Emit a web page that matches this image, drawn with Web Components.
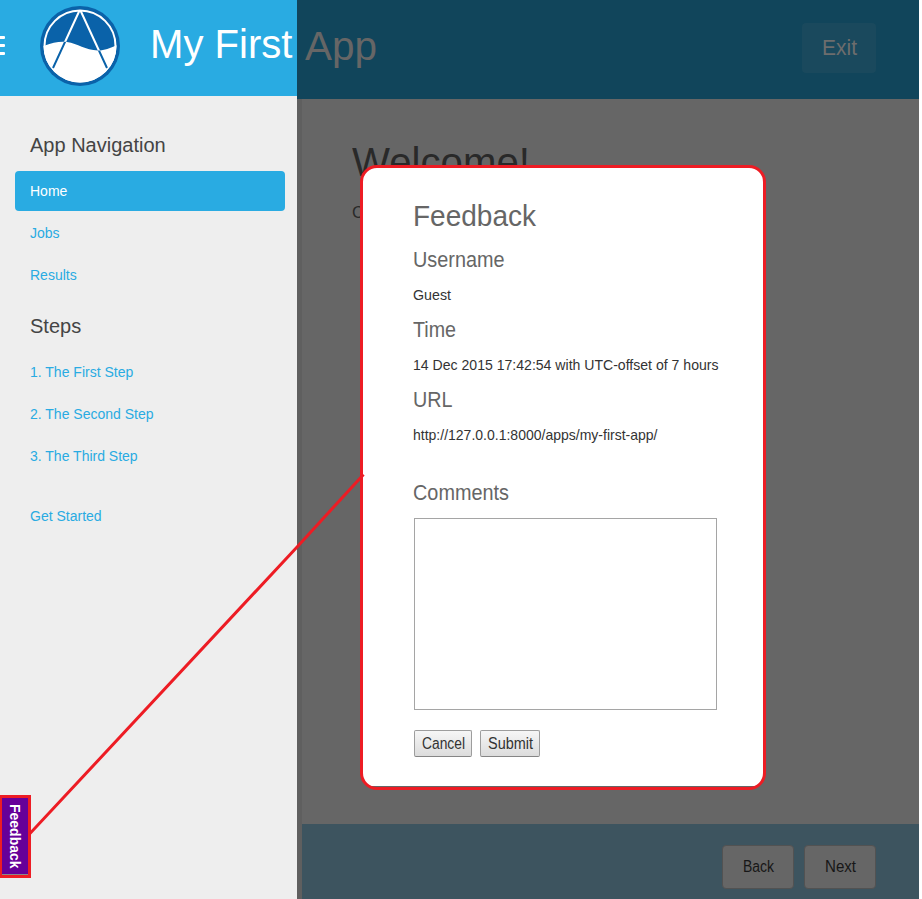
<!DOCTYPE html>
<html lang="en">
<head>
<meta charset="utf-8">
<title>My First App</title>
<style>
html,body{margin:0;height:100%;overflow:hidden;background:#fff}
body{font-family:"Liberation Sans",Arial,sans-serif}
</style>
</head>
<body>
<app-page></app-page>
<script>
function define(name, html, after) {
  customElements.define(name, class extends HTMLElement {
    connectedCallback() {
      if (this.shadowRoot) return;
      const t = document.createElement('template');
      t.innerHTML = html;
      this.attachShadow({ mode: 'open' }).append(t.content.cloneNode(true));
      if (after) after(this);
    }
  });
}

/* A single line of text, condensed or widened to the width in its "w" attribute. */
define('fit-text', `<style>
  :host{display:block;white-space:nowrap;height:var(--h,auto);line-height:var(--h,normal)}
  span{display:inline-block;transform-origin:0 50%}
</style><span><slot></slot></span>`, el => {
  const s = el.shadowRoot.querySelector('span');
  const w = +el.getAttribute('w');
  const r = s.getBoundingClientRect().width;
  if (w && r) { s.style.transform = `scaleX(${w / r})`; el.style.width = w + 'px'; }
});

define('app-logo', `<style>:host{display:block;width:80px;height:80px}svg{display:block}</style>
<svg width="80" height="80" viewBox="0 0 80 80">
  <defs><clipPath id="wave"><path d="M0 41L5 39.5C12 36.8 20 35 27 36C38 37.600 45 44 58 44.500C65 44.500 70 42 75 40L80 38V80H0Z"/></clipPath></defs>
  <circle cx="40" cy="40" r="40" fill="#0a62a9"/>
  <circle cx="40" cy="40" r="35.500" fill="none" stroke="#fff" stroke-width="2"/>
  <path d="M39.500 4.500L13 62M40.500 4.500L67 62" stroke="#fff" stroke-width="2" fill="none"/>
  <g clip-path="url(#wave)"><circle cx="40" cy="40" r="36.500" fill="#fff"/>
  <path d="M39.500 4.500L13 62M40.500 4.500L67 62" stroke="#0a62a9" stroke-width="2" fill="none"/></g>
</svg>`);

define('nav-item', `<style>
  :host{display:flex;align-items:center;height:40px;box-sizing:border-box;padding-left:15px;border-radius:4px;color:#29abe2;font-size:14px;margin-bottom:2px}
  :host([active]){background:#29abe2;color:#fff}
</style><fit-text><slot></slot></fit-text>`);

define('app-sidebar', `<style>
  :host{display:flex;flex-direction:column;background:#eee;height:100%;overflow:hidden}
  header{display:flex;height:96px;background:#29abe2;color:#fff;flex:none}
  .menu{width:5px;height:19px;margin:36px 35px 0 0;display:flex;flex-direction:column;justify-content:space-between}
  .menu i{height:3px;background:#fff;border-radius:0 1px 1px 0}
  app-logo{margin:6px 30px 0 0}
  .title{--h:46px;font-size:40px;padding-top:21px}
  nav{padding:0 12px 0 15px}
  h2{margin:0;font-weight:400;font-size:20px;line-height:40px;color:#444;padding-left:15px}
  .one{padding-top:29px;height:46px}
  .two{padding-top:9px;height:46px}
  nav h2{box-sizing:content-box}
  .one{height:46px}
  .two{height:46px}
  .last{margin-top:20px}
</style>
<header><div class="menu"><i></i><i></i><i></i></div><app-logo></app-logo><fit-text class="title" w="142.500">My First</fit-text></header>
<nav>
  <h2 class="one">App Navigation</h2>
  <nav-item active>Home</nav-item><nav-item>Jobs</nav-item><nav-item>Results</nav-item>
  <h2 class="two">Steps</h2>
  <nav-item>1. The First Step</nav-item><nav-item>2. The Second Step</nav-item><nav-item>3. The Third Step</nav-item>
  <nav-item class="last">Get Started</nav-item>
</nav>`);

define('foot-button', `<style>
  :host{display:flex;align-items:center;justify-content:center;box-sizing:border-box;width:72px;height:44px;border:1px solid #525252;border-radius:4px;background:#666;color:#171717;font-size:16px}
</style><slot></slot>`);

define('app-main', `<style>
  :host{display:flex;flex-direction:column;height:100%;background:#666;overflow:hidden}
  header{height:99px;flex:none;background:#11455b;color:#666;display:flex;justify-content:space-between}
  .app{--h:46px;font-size:40px;padding:23px 0 0 8px}
  .exit{margin:23px 43px 0 0;width:74px;height:50px;border-radius:4px;background:#1a495d;display:flex;align-items:center;justify-content:center;font-size:22px;color:#6d6d6d}
  main{flex:1;border-left:5px solid #5f5f5f;padding:40px 0 0 50px;color:#292929}
  .wel{--h:46px;font-size:40px}
  .copy{--h:20px;font-size:16px;margin-top:18px}
  footer{height:75px;flex:none;box-sizing:border-box;border-left:5px solid #5f5f5f;background:#3d545f;display:flex;justify-content:flex-end;gap:10px;padding:21px 43px 0 0}
</style>
<header><fit-text class="app" w="72">App</fit-text><div class="exit"><fit-text w="35">Exit</fit-text></div></header>
<main><fit-text class="wel" w="178">Welcome!</fit-text><fit-text class="copy" w="12">C</fit-text></main>
<footer><foot-button><fit-text w="31">Back</fit-text></foot-button><foot-button><fit-text w="31">Next</fit-text></foot-button></footer>`);

define('form-button', `<style>
  :host{display:flex;align-items:center;justify-content:center;box-sizing:border-box;height:27px;border:1px solid #9d9d9d;border-bottom-color:#858585;border-radius:2px;background:linear-gradient(#f6f6f6,#dcdcdc);color:#333;font-size:16px}
</style><slot></slot>`);

define('feedback-dialog', `<style>
  :host{display:block;position:absolute;left:360px;top:165px;width:406px;height:625px;box-sizing:border-box;border:3px solid #ed1c24;border-radius:17px;background:linear-gradient(#fff 618px,#666 618px);padding:28px 0 0 50px;color:#333}
  .h1{--h:40px;font-size:30px;color:#666}
  .h2{font-size:22px;color:#666}
  .p{font-size:15px}
  .box{width:303px;height:192px;box-sizing:border-box;border:1px solid #a5a5a5;margin:5px 0 20px 1px}
  .row{display:flex;gap:8px;margin-left:1px}
</style>
<fit-text class="h1" w="123">Feedback</fit-text>
<fit-text class="h2" style="--h:48px" w="91.500">Username</fit-text>
<fit-text class="p" style="--h:21px" w="38">Guest</fit-text>
<fit-text class="h2" style="--h:50px" w="43">Time</fit-text>
<fit-text class="p" style="--h:20px" w="305.500">14 Dec 2015 17:42:54 with UTC-offset of 7 hours</fit-text>
<fit-text class="h2" style="--h:49px" w="39.500">URL</fit-text>
<fit-text class="p" style="--h:22px" w="244.500">http://127.0.0.1:8000/apps/my-first-app/</fit-text>
<fit-text class="h2" style="--h:40px;margin-top:27px" w="96">Comments</fit-text>
<div class="box"></div>
<div class="row"><form-button style="width:58px"><fit-text w="43">Cancel</fit-text></form-button><form-button style="width:60px"><fit-text w="45">Submit</fit-text></form-button></div>`);

define('feedback-tab', `<style>
  :host{display:flex;align-items:center;justify-content:center;position:absolute;left:0;top:795px;width:31px;height:83px;box-sizing:border-box;border:3px solid #ed1c24;border-left-width:2px;background:linear-gradient(#609 76px,#888 76px)}
  span{writing-mode:vertical-rl;color:#fff;font:bold 14px/16px "Liberation Sans",Arial,sans-serif}
</style><span>Feedback</span>`);

/* Line that joins the tab to the dialog. */
define('link-line', `<style>
  :host{display:block;position:absolute;inset:0;pointer-events:none}svg{display:block}
</style><svg width="919" height="899"><path d="M30 833.500L298 546L362.500 475.500" fill="none" stroke="#ed1c24" stroke-width="3" stroke-linecap="square"/></svg>`);

define('app-page', `<style>
  :host{display:grid;grid-template-columns:297px 1fr;position:relative;width:919px;height:899px;overflow:hidden}
</style><app-sidebar></app-sidebar><app-main></app-main><feedback-dialog></feedback-dialog><feedback-tab></feedback-tab><link-line></link-line>`);
</script>
</body>
</html>
